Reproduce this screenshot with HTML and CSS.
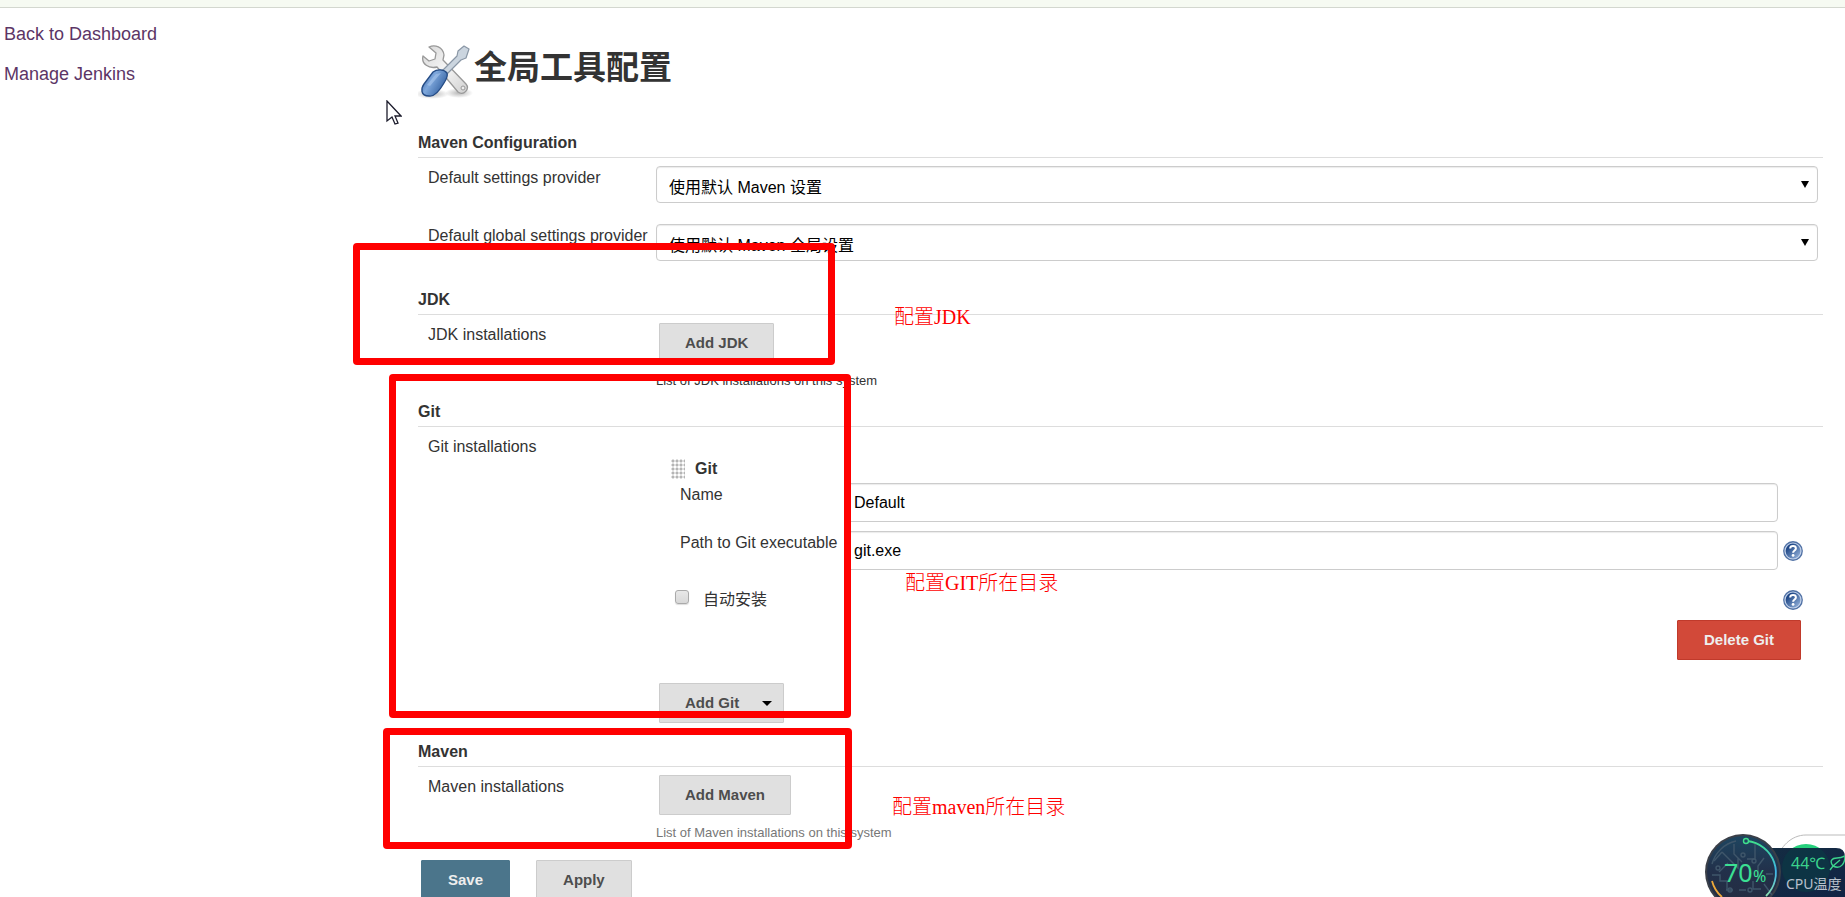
FILE: index.html
```html
<!DOCTYPE html>
<html lang="zh-CN">
<head>
<meta charset="utf-8">
<title>全局工具配置 [Jenkins]</title>
<link rel="stylesheet" href="styles.css">
</head>
<body>
<svg class="defs" aria-hidden="true">
  <defs>
    <linearGradient id="help-fill" x1="0" y1="0" x2="1" y2="1"><stop offset="0.2" stop-color="#1c4585"/><stop offset="1" stop-color="#9fbbe2"/></linearGradient>
    <symbol id="help" viewBox="0 0 20 20">
      <circle cx="10" cy="10" r="9.9" fill="#4f70a4"/>
      <circle cx="10" cy="10" r="8.6" fill="#c3d2ea"/>
      <circle cx="10" cy="10" r="7.4" fill="url(#help-fill)"/>
      <path d="M7.2 7.4C7.2 4.2 12.9 4.2 12.9 7.4C12.9 9.5 10.1 9.4 10.1 11.8" fill="none" stroke="#fff" stroke-width="2"/>
      <circle cx="10.1" cy="14.4" r="1.4" fill="#fff"/>
    </symbol>
  </defs>
</svg>
<div class="page">
  <div class="crumbs"></div>
  <div class="columns">
    <nav class="side">
      <a href="#">Back to Dashboard</a>
      <a href="#">Manage Jenkins</a>
    </nav>
    <main class="main">
      <h1 class="title">
        <svg class="title-icon" viewBox="2 0 56 56" aria-hidden="true">
          <defs>
            <linearGradient id="steel" x1="0" y1="0" x2="1" y2="1"><stop offset="0" stop-color="#d6d6d6"/><stop offset=".5" stop-color="#f6f6f6"/><stop offset="1" stop-color="#cfcfcf"/></linearGradient>
            <linearGradient id="grip" x1="0" y1="0" x2="1" y2="0.6"><stop offset="0" stop-color="#2b559a"/><stop offset=".45" stop-color="#7fa8dc"/><stop offset="1" stop-color="#315f9f"/></linearGradient>
            <radialGradient id="shade"><stop offset="0" stop-color="#999" stop-opacity=".7"/><stop offset="1" stop-color="#999" stop-opacity="0"/></radialGradient>
          </defs>
          <ellipse cx="16" cy="50" rx="17" ry="5" fill="url(#shade)"/>
          <ellipse cx="43" cy="49" rx="14" ry="5" fill="url(#shade)"/>
          <path d="M13 3C19 0 27 3 28 11L27 16L50 40C54 45 48 52 42 48L21 23C13 25 5 20 7 12L13 17L19 15L20 9Z" fill="url(#steel)" stroke="#999" stroke-width="1.3" stroke-linejoin="round"/>
          <circle cx="47" cy="44" r="2" fill="#eee" stroke="#999"/>
          <path d="M26 27L41 12L42 7L48 2L53 5L50 14L45 16L30 31Z" fill="#cbd5df" stroke="#8996a5" stroke-width="1.2" stroke-linejoin="round"/>
          <path d="M17 28C21 25 28 25 31 29C32 32 30 36 28 39C24 46 19 53 13 52C4 52 5 44 8 40Z" fill="url(#grip)" stroke="#244b84" stroke-width="1.3"/>
          <path d="M20 30L25 29L14 42L11 41Z" fill="#a9c6ec" opacity=".6"/>
        </svg>
        <span>全局工具配置</span>
      </h1>
      <form class="form" onsubmit="return false">
        <section class="section">
          <h2 class="heading">Maven Configuration</h2>
          <div class="row">
            <label class="label" for="settings">Default settings provider</label>
            <div class="field select-wrap"><select id="settings" class="select"><option>使用默认 Maven 设置</option></select></div>
          </div>
          <div class="row row-next">
            <label class="label" for="global-settings">Default global settings provider</label>
            <div class="field select-wrap"><select id="global-settings" class="select"><option>使用默认 Maven 全局设置</option></select></div>
          </div>
        </section>
        <section class="section section-jdk">
          <h2 class="heading">JDK</h2>
          <div class="row">
            <div class="label">JDK installations</div>
            <div>
              <button class="button add" type="button">Add JDK</button>
              <p class="hint">List of JDK installations on this system</p>
            </div>
          </div>
        </section>
        <section class="section section-git">
          <h2 class="heading">Git</h2>
          <div class="row">
            <div class="label">Git installations</div>
            <div>
              <div class="tool">
                <div class="tool-head"><span class="handle"></span><b>Git</b></div>
                <div class="tool-row">
                  <label class="label" for="git-name">Name</label>
                  <input id="git-name" class="input" type="text" value="Default">
                </div>
                <div class="tool-row">
                  <label class="label" for="git-path">Path to Git executable</label>
                  <input id="git-path" class="input" type="text" value="git.exe">
                  <a class="help" href="#" aria-label="Help for Path to Git executable"><svg viewBox="0 0 20 20"><use href="#help"/></svg></a>
                </div>
                <div class="tool-auto">
                  <input id="auto" class="check" type="checkbox">
                  <label for="auto">自动安装</label>
                  <a class="help" href="#" aria-label="Help for 自动安装"><svg viewBox="0 0 20 20"><use href="#help"/></svg></a>
                </div>
                <div class="tool-foot"><button class="button danger" type="button">Delete Git</button></div>
              </div>
              <button class="button add menu" type="button">Add Git<span class="caret"></span></button>
            </div>
          </div>
        </section>
        <section class="section section-maven">
          <h2 class="heading">Maven</h2>
          <div class="row">
            <div class="label">Maven installations</div>
            <div>
              <button class="button add" type="button">Add Maven</button>
              <p class="hint faded">List of Maven installations on this system</p>
            </div>
          </div>
        </section>
        <div class="actions">
          <button class="button primary" type="submit">Save</button>
          <button class="button" type="button">Apply</button>
        </div>
      </form>
    </main>
  </div>

  <div class="mark mark-jdk"></div>
  <div class="mark mark-git"></div>
  <div class="mark mark-maven"></div>
  <div class="note note-jdk">配置<span>JDK</span></div>
  <div class="note note-git">配置<span>GIT</span>所在目录</div>
  <div class="note note-maven">配置<span>maven</span>所在目录</div>

  <svg class="pointer" viewBox="0 0 16 26" aria-hidden="true"><path d="M1 1V21L6 17L9 24L12 23L9 16H15Z" fill="#fff" stroke="#1c1c2c" stroke-width="1.3"/></svg>

  <svg class="monitor" viewBox="0 0 145 67" aria-label="CPU">
    <defs>
      <linearGradient id="dial" x1="0" y1="0" x2="0" y2="1"><stop offset="0" stop-color="#1e4560"/><stop offset=".5" stop-color="#22304a"/><stop offset="1" stop-color="#252c40"/></linearGradient>
      <linearGradient id="arc" x1="0" y1="0" x2="0" y2="1"><stop offset="0" stop-color="#3fdf8c"/><stop offset=".55" stop-color="#3fb4e6"/><stop offset="1" stop-color="#8de0b0"/></linearGradient>
      <linearGradient id="panel" x1="0" y1="0" x2="1" y2="1"><stop offset="0" stop-color="#142c42"/><stop offset="1" stop-color="#112445"/></linearGradient>
      <clipPath id="panel-clip"><path d="M64 18H136Q145 18 145 27V67H64Z"/></clipPath>
    </defs>
    <path d="M150 5H106C91 5 80 17 76 31V70H150Z" fill="#fff" stroke="#bbb"/>
    <circle cx="106" cy="38" r="24" fill="#25d07c"/>
    <path d="M64 18H136Q145 18 145 27V67H64Z" fill="url(#panel)"/>
    <circle cx="106" cy="38" r="24" fill="#0b3944" opacity=".7" clip-path="url(#panel-clip)"/>
    <circle cx="43" cy="42" r="38" fill="#3a3f48"/>
    <circle cx="43" cy="42" r="36" fill="url(#dial)"/>
    <g fill="none" stroke="#3f566a" stroke-width="1.4">
      <path d="M22 22L38 38V28M22 22L14 31M34 14V24L42 32M19 42L28 33M12 45H20V51H27V60M55 14V29H47M64 28L58 36V48M66 44H73M53 51V59H61M46 60H39M64 54L72 65M33 60H26"/>
      <circle cx="18" cy="38" r="2"/><circle cx="43" cy="25" r="2"/><circle cx="54" cy="31" r="2"/><circle cx="30" cy="60" r="2"/><circle cx="50" cy="60" r="2"/>
      <path d="M12 34A32 32 0 0 1 36 11"/>
    </g>
    <path d="M47 11A32 32 0 0 1 66 66" fill="none" stroke="url(#arc)" stroke-width="1.8"/>
    <path d="M12 51A32 32 0 0 0 22 67" fill="none" stroke="#eda83a" stroke-width="1.8"/>
    <circle cx="46" cy="11" r="2.5" fill="#1e4560" stroke="#3fdf8c" stroke-width="1.4"/>
    <text class="dial-value" x="24" y="52">70</text>
    <text class="dial-unit" x="53" y="52">%</text>
    <text class="temp" x="91" y="39">44℃</text>
    <path d="M130 40L133 36L140 30M133 36C129 31 132 28 137 28C141 28 143 27 145 26C145 33 141 40 133 36Z" fill="none" stroke="#3bd28c" stroke-width="1.4"/>
    <text class="temp-label" x="86" y="59">CPU温度</text>
  </svg>
</div>
</body>
</html>
```
FILE: styles.css
```css
* { box-sizing: border-box; }
body {
  margin: 0;
  background: #fff;
  color: #333;
  font: 16px/20px "Liberation Sans", Arial, "Noto Sans CJK SC", sans-serif;
}
.defs { position: absolute; width: 0; height: 0; }
.page { position: relative; height: 100vh; overflow: hidden; }
.crumbs { height: 8px; background: #f6faf2; border-bottom: 1px solid #d3d7cf; }
.columns { display: flex; }

.side {
  flex: 0 0 418px;
  display: flex;
  flex-direction: column;
  align-items: flex-start;
  gap: 20px;
  padding: 16px 4px;
}
.side a { color: #5c3566; font-size: 18px; text-decoration: none; }

.main { flex: 1; min-width: 0; padding: 36px 22px 0 0; }
.title { display: flex; align-items: flex-start; height: 56px; margin: 0 0 33px; font-size: 33px; line-height: 48px; }
.title-icon { width: 56px; height: 56px; }

.heading { margin: 0; padding-bottom: 4px; border-bottom: 1px solid #ddd; font-size: 16px; line-height: 20px; }
.row { display: grid; grid-template-columns: 228px 1fr; padding: 8px 0 0 10px; }
.row-next { padding-top: 21px; }
.label { padding-top: 2px; white-space: nowrap; }
.section-jdk { margin-top: 29px; }
.section-git { margin-top: 13px; }
.section-maven { margin-top: 19px; }

.field { margin-right: 5px; }
.select-wrap { position: relative; }
.select-wrap::after {
  content: "";
  position: absolute;
  right: 9px;
  top: 15px;
  border: solid transparent;
  border-width: 7px 4px 0;
  border-top-color: #000;
}
.select, .input {
  display: block;
  width: 100%;
  border: 1px solid #ccc;
  border-radius: 4px;
  background: #fff;
  box-shadow: inset 0 1px 1px rgba(0, 0, 0, .08);
  color: #000;
  font: inherit;
}
.select { height: 37px; appearance: none; padding: 6px 12px 0; }
.input { height: 39px; padding: 0 8px; }

.button {
  height: 40px;
  padding: 0 26px;
  border: 1px solid #ccc;
  border-radius: 1px;
  background: #e0e0e0;
  color: #4d4d4d;
  font: bold 15px/20px "Liberation Sans", Arial, sans-serif;
}
.add { display: block; margin-left: 3px; padding: 0 25px; }
.menu { display: flex; align-items: center; gap: 23px; padding-right: 11px; }
.caret { border: solid transparent; border-width: 5px 5px 0; border-top-color: #000; }
.primary { background: #4b758b; border-color: #4b758b; color: #eee; }
.danger { background: #d24939; border-color: #c03a2b; color: #eee; }
.hint { margin: 10px 0 0; font-size: 13px; line-height: 16px; }
.faded { color: #777; }

.tool { padding: 24px 20px 23px 15px; }
.tool-head { display: flex; align-items: center; gap: 10px; height: 24px; padding-bottom: 4px; }
.handle { width: 14px; height: 20px; background: radial-gradient(circle at 2px 2px, #b5b5b5 1px, transparent 2px) 0 0 / 4px 4px; }
.tool-row { display: grid; grid-template-columns: 160px 1fr 20px; column-gap: 5px; align-items: center; padding-left: 9px; margin-bottom: 9px; }
.tool-row .label { align-self: start; }
.help { width: 20px; height: 20px; }
.help svg { display: block; width: 20px; height: 20px; }
.tool-auto { display: flex; align-items: center; height: 20px; margin-top: 20px; padding-left: 4px; }
.tool-row .help, .tool-auto .help { margin-left: auto; }
.check {
  appearance: none;
  width: 14px;
  height: 14px;
  margin: 0 14px 6px 0;
  border: 1px solid #aaa;
  border-radius: 3px;
  background: linear-gradient(#e8e8e8, #d8d8d8);
  box-shadow: 0 1px 1px #ddd;
}
.tool-foot { display: flex; justify-content: flex-end; margin-top: 10px; padding-right: 2px; }
.actions { display: flex; gap: 26px; margin-top: 19px; padding-left: 3px; }

.mark { position: absolute; border: 7px solid #f00; border-radius: 4px; pointer-events: none; }
.mark-jdk { left: 353px; top: 243px; width: 482px; height: 122px; }
.mark-git { left: 389px; top: 374px; width: 462px; height: 344px; }
.mark-maven { left: 383px; top: 728px; width: 469px; height: 121px; }
.note { position: absolute; color: #f00; font: 300 20px/24px "Noto Sans CJK SC", sans-serif; white-space: nowrap; }
.note span { font-family: "Liberation Serif", serif; }
.note-jdk { left: 894px; top: 304px; }
.note-git { left: 905px; top: 570px; }
.note-maven { left: 892px; top: 794px; }
.pointer { position: absolute; left: 386px; top: 100px; width: 16px; height: 26px; }

.monitor { position: absolute; right: 0; bottom: 0; width: 145px; height: 67px; }
.monitor text { font-family: "Noto Sans", "Noto Sans CJK SC", sans-serif; }
.dial-value { font-size: 25px; fill: #3be093; }
.dial-unit { font-size: 16px; fill: #3be093; }
.temp { font-size: 16px; fill: #3bd28c; }
.temp-label { font-size: 14px; fill: #b8c0cc; }
```
